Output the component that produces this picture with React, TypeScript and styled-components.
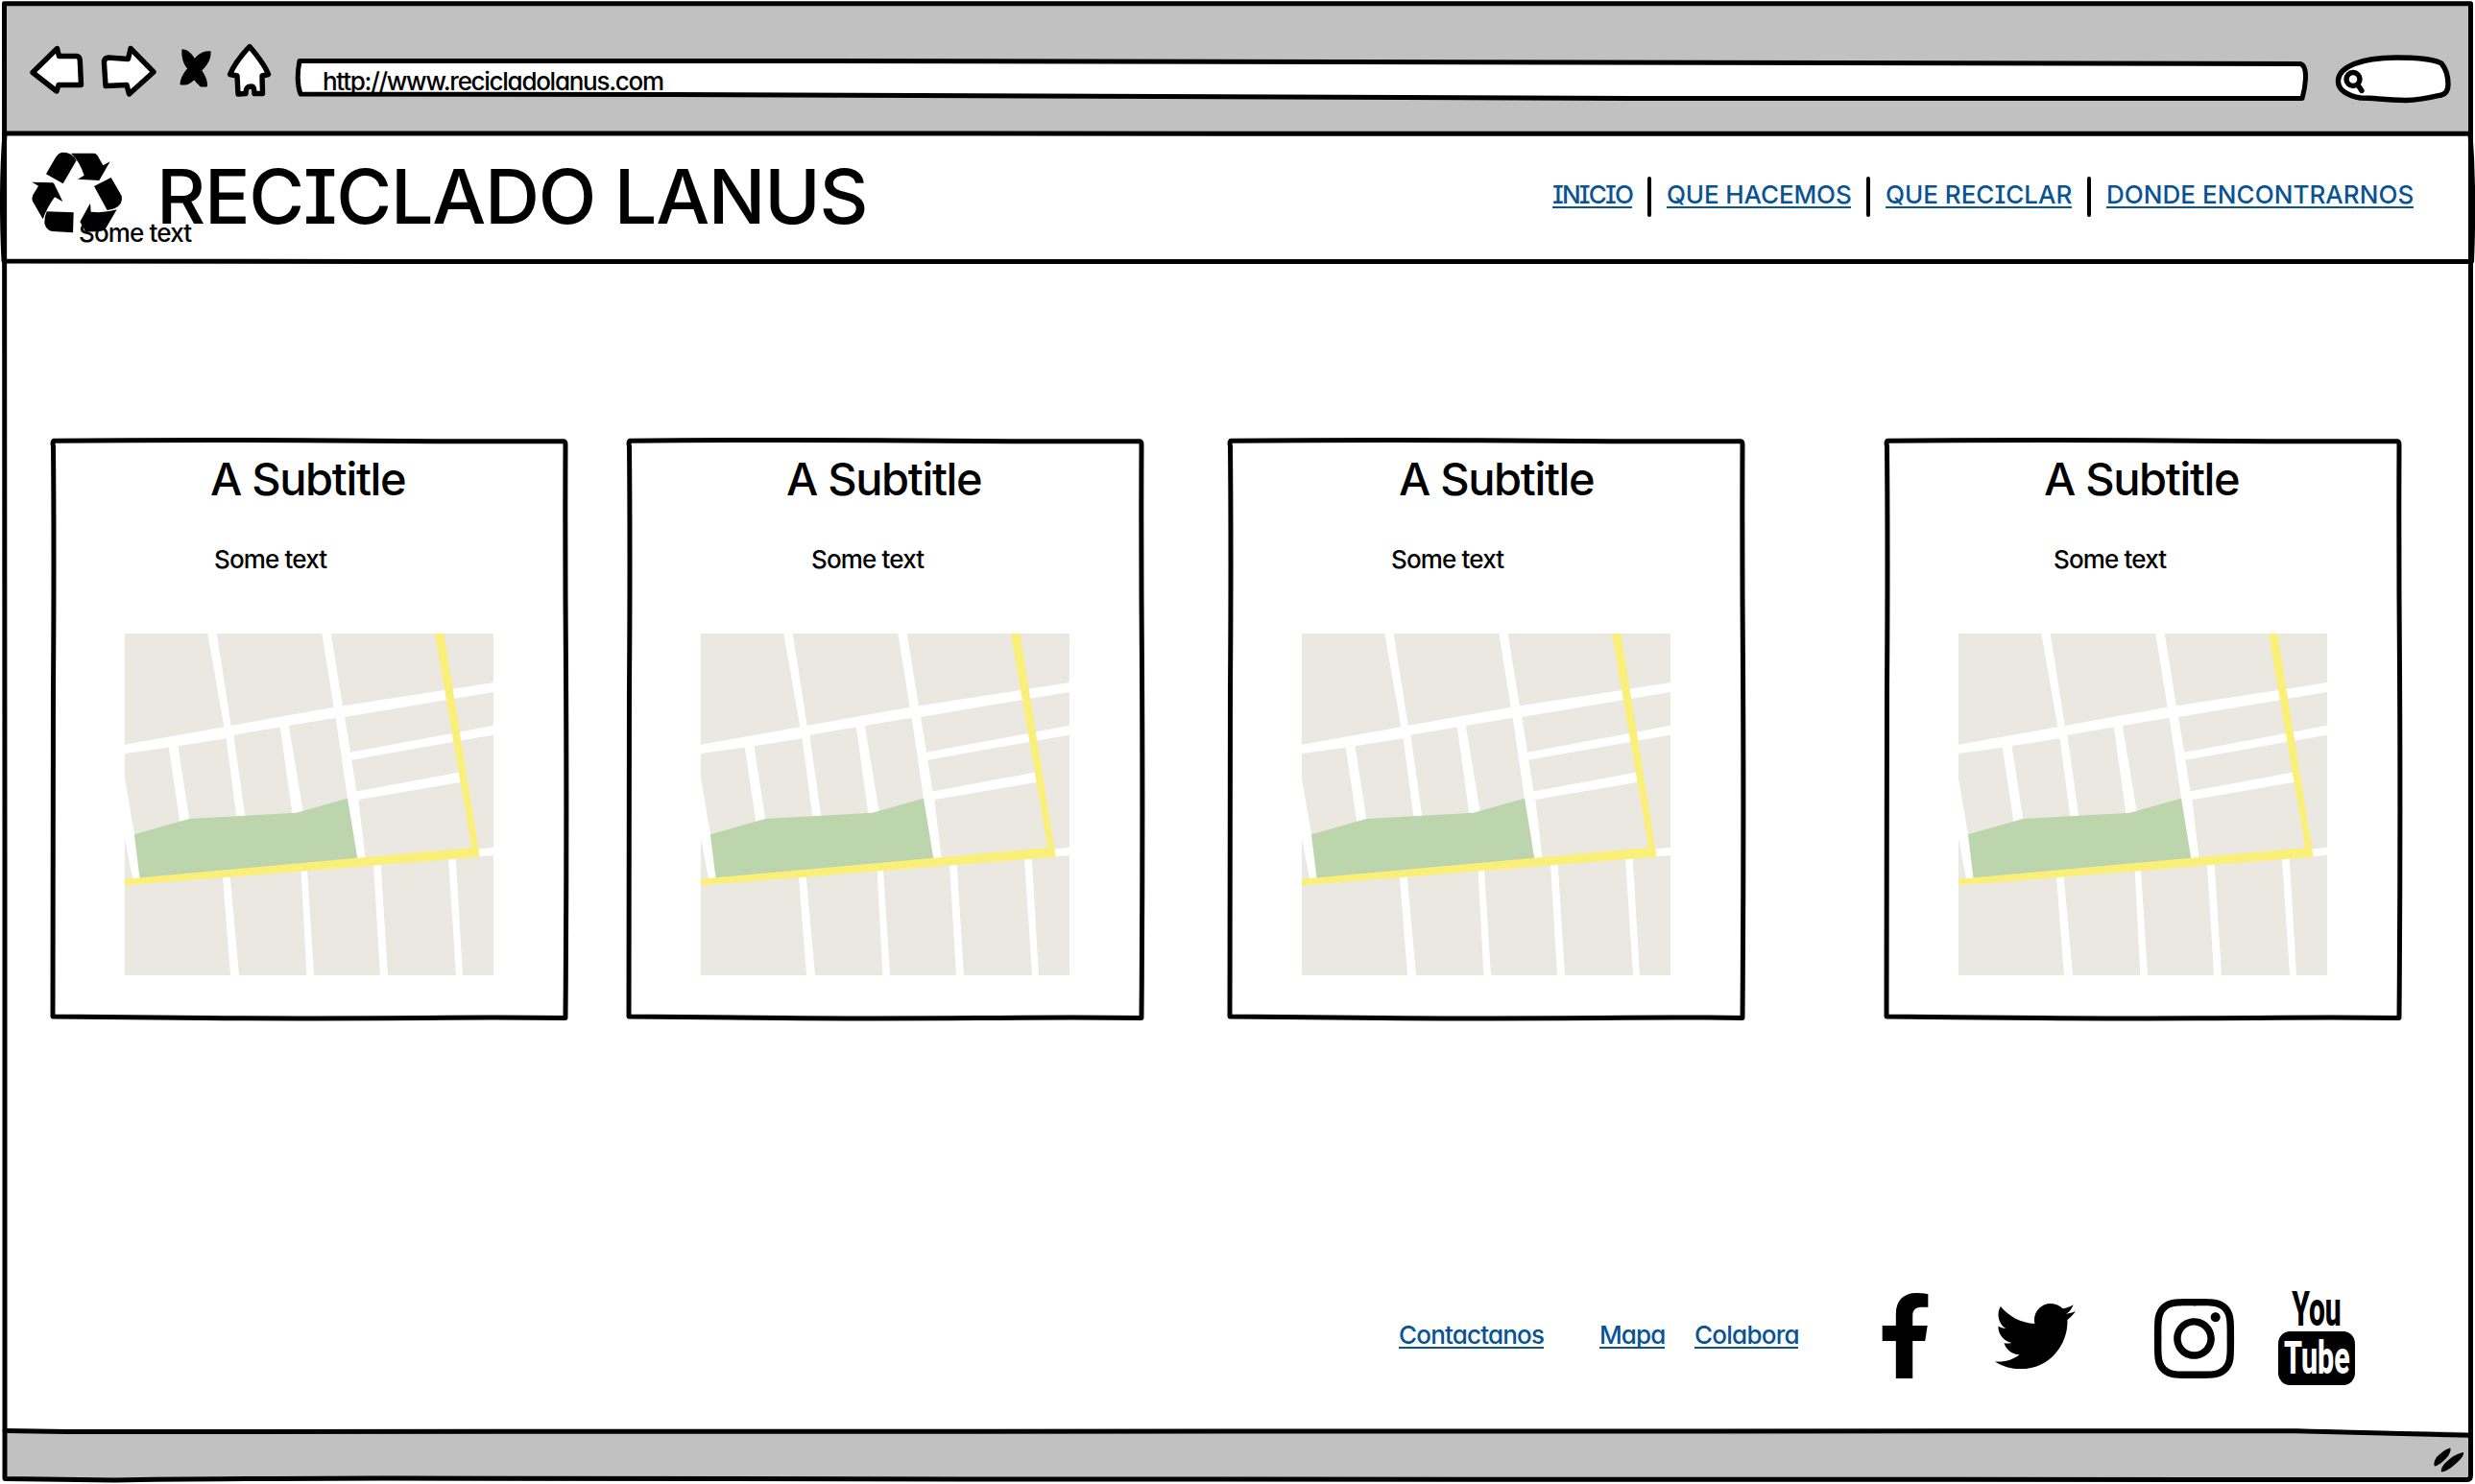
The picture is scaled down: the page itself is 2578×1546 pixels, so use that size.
import React from "react";
import styled, { createGlobalStyle } from "styled-components";
import { FaFacebookF, FaInstagram, FaTwitter } from "react-icons/fa";

const INK = "#000";
const CHROME = "#c1c1c1";
const LINK = "#085394";

const GlobalStyle = createGlobalStyle`
  *, *::before, *::after { box-sizing: border-box; }
  body {
    margin: 0;
    background: #fff;
    color: ${INK};
    font-family: Inter, "Open Sans", sans-serif;
    font-feature-settings: "cv11", "cv08";
    overflow: hidden;
  }
`;

/* ---------- window ---------- */

const Window = styled.div`
  position: relative;
  display: grid;
  grid-template-rows: 139px 134px 1218px 55px;
  width: 2578px;
  height: 1546px;
  overflow: hidden;
`;

const Outline = styled.svg`
  position: absolute;
  inset: 0;
  width: 100%;
  height: 100%;
  fill: none;
  stroke: ${INK};
  stroke-width: 5;
  stroke-linejoin: round;
  stroke-linecap: round;
  pointer-events: none;
  overflow: visible;
`;

const Toolbar = styled.div`
  display: flex;
  height: 139px;
  margin: 3px 3px 0 4px;
  padding-left: 24px;
  background: ${CHROME};
`;

const ToolGlyph = styled.svg<{ $w: number; $after: number }>`
  flex: none;
  width: ${p => p.$w}px;
  height: 139px;
  margin-top: -3px;
  margin-right: ${p => p.$after}px;
  fill: #fff;
  stroke: ${INK};
  stroke-width: 5.4;
  stroke-linejoin: round;
  stroke-linecap: round;
`;

const AddressBar = styled.div`
  position: relative;
  display: flex;
  flex: none;
  width: 2096px;
  height: 139px;
  margin-top: -3px;
  margin-right: 29px;
  padding: 72px 0 0 29px;
`;

const FieldShape = styled(Outline)`
  fill: #fff;
`;

const Url = styled.span`
  position: relative;
  font-size: 26px;
  font-weight: 450;
  line-height: 26px;
  letter-spacing: -1.28px;
`;

/* ---------- header ---------- */

const Header = styled.header`
  position: relative;
  display: flex;
  align-items: flex-start;
  padding: 0 64px 0 32px;
  background: #fff;
`;

const Logo = styled.svg`
  flex: none;
  width: 97px;
  height: 87px;
  margin-top: 17.5px;
`;

const Title = styled.h1`
  margin: 16px 0 0 34px;
  font-size: 79px;
  font-weight: 500;
  line-height: 98px;
  letter-spacing: -1.3px;
  white-space: nowrap;
`;

const Tagline = styled.span`
  position: absolute;
  left: 82px;
  top: 91px;
  font-size: 26px;
  font-weight: 450;
  line-height: 26px;
  letter-spacing: -0.85px;
`;

const Nav = styled.nav`
  display: flex;
  margin: 51px 0 0 auto;
`;

const Link = styled.a<{ $w: number; $track: number; $after?: number }>`
  flex: none;
  width: ${p => p.$w}px;
  height: 27px;
  margin-right: ${p => p.$after ?? 0}px;
  border-bottom: 2px solid ${LINK};
  color: ${LINK};
  font-size: 26px;
  font-weight: 450;
  line-height: 25px;
  letter-spacing: ${p => p.$track}px;
  white-space: nowrap;
`;

const Divider = styled.span`
  width: 4px;
  height: 42px;
  margin: -6px 16px 0;
  border-radius: 2px;
  background: ${INK};
`;

/* ---------- cards ---------- */

const Main = styled.main`
  display: flex;
  flex-direction: column;
  background: #fff;
`;

const CardRow = styled.section`
  display: flex;
  padding: 184px 0 0 53px;
`;

const CardBox = styled.article<{ $after: number }>`
  position: relative;
  flex: none;
  display: flex;
  flex-direction: column;
  width: 540px;
  height: 606px;
  margin-right: ${p => p.$after}px;
  padding-top: 18px;
`;

const Subtitle = styled.h2<{ $x: number }>`
  margin: 0 0 45px ${p => p.$x}px;
  font-size: 47px;
  font-weight: 500;
  line-height: 48px;
  letter-spacing: -1.35px;
  white-space: nowrap;
`;

const Note = styled.p<{ $x: number }>`
  margin: 0 0 62px ${p => p.$x}px;
  font-size: 26px;
  font-weight: 450;
  line-height: 30px;
  letter-spacing: -0.85px;
`;

const MapSvg = styled.svg`
  width: 384px;
  height: 356px;
  margin-left: 77px;
  background: #ebe8e1;
`;

/* ---------- footer ---------- */

const Footer = styled.footer`
  display: flex;
  align-items: flex-start;
  height: 154px;
  margin-top: auto;
  padding-left: 1457px;
`;

const FooterLinks = styled.div`
  display: flex;
  flex: none;
  width: 483px;
  margin-top: 41px;
`;

const Social = styled.span<{ $size: number; $top: number; $after: number }>`
  display: flex;
  flex: none;
  margin-top: ${p => p.$top}px;
  margin-right: ${p => p.$after}px;
  font-size: ${p => p.$size}px;

  svg { display: block; }
`;

const YouTube = styled.span`
  display: flex;
  flex-direction: column;
  align-items: center;
  width: 80px;
  margin-top: 4px;
  font-family: Roboto, sans-serif;
  font-weight: 800;
  line-height: 46px;
`;

const You = styled.span`
  font-size: 50px;
  transform: scaleX(0.6);
`;

const Tube = styled.span`
  display: flex;
  justify-content: center;
  width: 80px;
  height: 56px;
  border-radius: 12px / 13px;
  background: ${INK};
  color: #fff;
  font-size: 49px;
  line-height: 55px;

  span { transform: scaleX(0.62); }
`;

const StatusBar = styled.div`
  display: flex;
  justify-content: flex-end;
  height: 51px;
  margin: 0 3px 0 4px;
  background: ${CHROME};
`;

const Grip = styled.svg`
  width: 45px;
  height: 51px;
`;

/* ---------- data ---------- */

const nav = [
  { label: "INICIO", w: 83, track: -1.8 },
  { label: "QUE HACEMOS", w: 192, track: -0.12 },
  { label: "QUE RECICLAR", w: 194, track: 0 },
  { label: "DONDE ENCONTRARNOS", w: 320, track: 0.06 },
];

const footerLinks = [
  { label: "Contactanos", w: 151, track: -0.82, after: 58 },
  { label: "Mapa", w: 68, track: -0.9, after: 31 },
  { label: "Colabora", w: 108, track: -0.75, after: 0 },
];

const cards = [
  { titleX: 166, noteX: 170, after: 60 },
  { titleX: 166, noteX: 192, after: 86 },
  { titleX: 178, noteX: 170, after: 144 },
  { titleX: 166, noteX: 176, after: 0 },
];

const streets = [
  "319,60 347,60 392,347 400,377 436,632 409,632 377,388 370,352",
  "676,60 704,60 741,288 747,321 765,430 784,553 790,580 812,765 787,765 756,575 719,323 713,290",
  "60,407 370,352 713,290 1060,237 1212,213 1212,243 1090,263 747,321 719,323 400,377 377,388 197,416 60,435",
  "197,414 226,409 262,642 232,648",
  "545,349 572,345 617,616 596,622 583,622",
  "760,432 1083,372 1212,347 1212,377 1085,399 763,456",
  "780,554 1103,494 1133,520 1107,525 786,580",
  "60,512 90,688 107,826 84,826 60,700",
  "1164,734 1212,728 1212,753 1164,757",
  "366,820 389,818 417,1128 390,1128",
  "611,800 630,798 651,1128 628,1128",
  "837,780 860,780 882,1128 858,1128",
  "1071,762 1094,760 1116,1128 1095,1128",
];

/* ---------- parts ---------- */

function CityMap() {
  return (
    <MapSvg viewBox="60 60 1152 1068" preserveAspectRatio="none">
      {streets.map(points => (
        <polygon key={points} points={points} fill="#fff" />
      ))}
      <polygon points="90,688 262,639 596,620 756,575 787,765 107,826" fill="#bcd5ad" />
      <polygon points="1029,60 1057,60 1169,758 60,847 60,827 1144,729" fill="#faef78" />
    </MapSvg>
  );
}

function Card({ titleX, noteX, after }: { titleX: number; noteX: number; after: number }) {
  return (
    <CardBox $after={after}>
      <Outline viewBox="0 0 540 606">
        <path d="M3 2.200 Q120 1.200 260 1.700 Q330 2 400 2.700 L534 2.700 Q536 3 536 6 Q535.500 120 536.500 240 Q537.500 420 536 603.500 Q470 602.500 410 603.300 Q250 604.500 160 603.500 L2 602 Q1.500 450 2.500 260 Q3.500 120 2.500 8 Q1.500 4 3 2.200 Z" />
      </Outline>
      <Subtitle $x={titleX}>A Subtitle</Subtitle>
      <Note $x={noteX}>Some text</Note>
      <CityMap />
    </CardBox>
  );
}

export default function App() {
  return (
    <>
      <GlobalStyle />
      <Window>
        <Toolbar>
          <ToolGlyph $w={62} $after={12} viewBox="28 0 62 139">
            <path d="M34 75.5 L59.5 50.5 L61.5 58.5 L80 58.5 Q83 59 83.3 63 L84.5 88.5 L61 88.5 L59 95 Z" />
          </ToolGlyph>
          <ToolGlyph $w={64} $after={20} viewBox="102 0 64 139">
            <path d="M108.5 66 Q108 60.5 113 60 L133.5 61.5 L136 50.5 L160 75 L134.5 98 L132 88.5 L110 89.5 Z" />
          </ToolGlyph>
          <ToolGlyph $w={36} $after={12} viewBox="186 0 36 139">
            <path
              d="M190 52 C195 51 201 57 204.500 65 C209 73 216 80 215.5 90 L209 90 C204 86 199 79 198 74 C192 69 189 60 190 52 Z M219 54 C220 62 214 70 208 75 C206 80 198 88 193 88 L188 88 C188 82 192 75 197 70 C201 61 210 52 219 54 Z"
              fill={INK}
              strokeWidth={1}
            />
          </ToolGlyph>
          <ToolGlyph $w={52} $after={21} viewBox="234 0 52 139">
            <path d="M260 48.500 C268 58 276 68 279.500 77.500 L273 79 L273.500 97.500 L265 97.500 Q265 90 262.500 90 L258.500 90.500 Q256 92 256 97.500 L248 98 L247 79 L239.500 77.500 C244 67 252 57 260 48.500 Z" />
          </ToolGlyph>
          <AddressBar>
            <FieldShape viewBox="307 0 2096 139">
              <path d="M312 63.500 L860 63.500 Q1500 64 2396 66.500 Q2402 68 2401.500 82 Q2401 92 2398 102.500 L1700 102.500 Q1000 101 700 98.500 L313 98 Q308 84 312 63.500 Z" />
            </FieldShape>
            <Url>http://www.recicladolanus.com</Url>
          </AddressBar>
          <ToolGlyph $w={124} $after={0} viewBox="2432 0 124 139">
            <path d="M2435.500 84 C2436 70 2458 60 2496 60 C2520 60 2536 62 2543 66 C2548 72 2550 80 2550 88 Q2550 97 2543 99 C2530 102 2520 104.500 2506 104.500 C2480 104 2475 102 2459 102 C2446 100 2435 94 2435.500 84 Z" />
            <circle cx="2451" cy="82.500" r="7" />
            <path d="M2456 88.500 L2460 94.500" />
          </ToolGlyph>
        </Toolbar>

        <Header>
          <Logo viewBox="36 50 291 261">
            <path d="M84 123 L112 74 Q122 56 136 55 Q152 55 161 61 Q172 68 179 80 L137 153 Z" />
            <path d="M162 58 L234 58 Q241 59 245 66 L262 96 L284 84 L250 143 L183 139 L203 127 Q190 85 162 58 Z" />
            <path d="M234 161 L287 134 L320 191 Q323 203 317 215 Q306 232 275 236 Z" />
            <path d="M305 234 L272 290 Q264 302 250 302 L208 304 L190 272 L222 214 L224 241 Q265 246 305 234 Z" />
            <path d="M86 240 L170 243 L168 306 L104 302 Q84 300 79 276 Q78 258 86 240 Z" />
            <path d="M40 148 L104 150 Q109 151 111 157 L136 209 L111 195 Q88 225 74 264 L42 208 Q38 200 43 188 L60 160 Z" />
          </Logo>
          <Title>RECICLADO LANUS</Title>
          <Tagline>Some text</Tagline>
          <Nav>
            {nav.map((item, i) => (
              <React.Fragment key={item.label}>
                {i > 0 && <Divider />}
                <Link $w={item.w} $track={item.track}>{item.label}</Link>
              </React.Fragment>
            ))}
          </Nav>
        </Header>

        <Main>
          <CardRow>
            {cards.map((card, i) => (
              <Card key={i} {...card} />
            ))}
          </CardRow>
          <Footer>
            <FooterLinks>
              {footerLinks.map(item => (
                <Link key={item.label} $w={item.w} $track={item.track} $after={item.after}>
                  {item.label}
                </Link>
              ))}
            </FooterLinks>
            <Social $size={89} $top={10} $after={49}><FaFacebookF /></Social>
            <Social $size={84} $top={13} $after={76}><FaTwitter /></Social>
            <Social $size={95} $top={10} $after={40}><FaInstagram /></Social>
            <YouTube>
              <You>You</You>
              <Tube><span>Tube</span></Tube>
            </YouTube>
          </Footer>
        </Main>

        <StatusBar>
          <Grip viewBox="2530 1491 45 51">
            <path d="M2552 1508.500 Q2554 1510 2550 1517 Q2541 1527 2536 1527.500 Q2534 1524 2538 1518 Q2546 1510 2552 1508.500 Z" />
            <path d="M2566 1513 Q2567 1516 2561 1522 Q2550 1533 2543 1533.500 Q2542 1530 2546 1525 Q2557 1514 2566 1513 Z" />
          </Grip>
        </StatusBar>

        <Outline viewBox="0 0 2578 1546">
          <path d="M4.500 3.700 L2573.500 3.700 L2573.500 1537 Q2573.500 1541.500 2570 1541.500 L1000 1541 L400 1540 Q200 1540.500 120 1542 L5 1540.500 L5 900 L4.500 3.700 Z" />
          <path d="M5 139 L2573 139.300 Q2577.500 200 2574.500 272.500 L400 272.500 L4 272 Q0.500 200 5 139 Z" />
          <path d="M5 1490.500 L70 1491.500 L2392 1490.700 L2573 1495.300" />
          <path d="M2395 1488 L2571 1492 L2571 1488 Z" fill="#fff" stroke="none" />
        </Outline>
      </Window>
    </>
  );
}
